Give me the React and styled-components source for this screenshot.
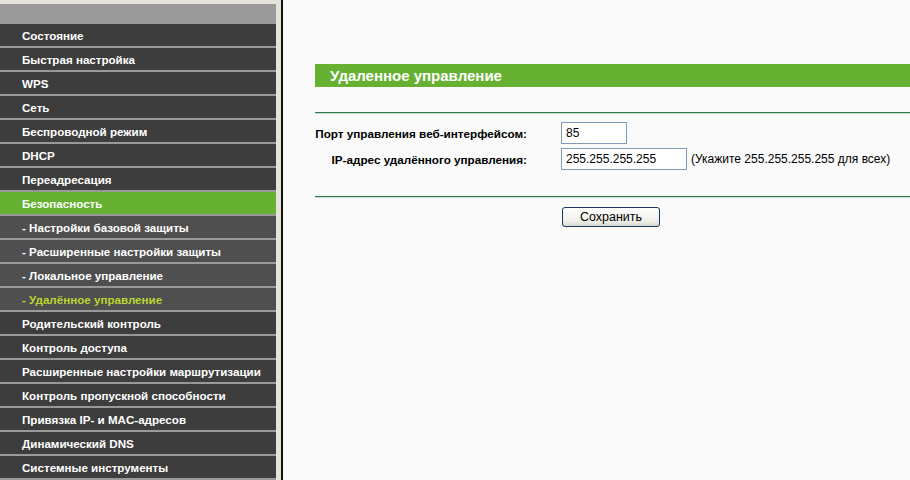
import React from "react";
import styled, { createGlobalStyle } from "styled-components";

const GlobalStyle = createGlobalStyle`
    html, body {
        margin: 0;
        padding: 0;
        background: #fafafa;
        font-family: "Liberation Sans", Arial, sans-serif;
    }
`;

const Page = styled.div`
    display: flex;
    width: 910px;
    height: 480px;
    overflow: hidden;
`;

const Sidebar = styled.div`
    display: flex;
    flex-direction: column;
    gap: 2px;
    width: 276px;
    flex-shrink: 0;
    padding-top: 4px;
    background: #9a9a9a;
    box-shadow: inset 0 4px 0 #e6e4da;
`;

const SideHeader = styled.div`
    height: 18px;
`;

const MenuItem = styled.div`
    height: 22px;
    display: flex;
    align-items: center;
    padding-left: 22px;
    background: ${(p) => (p.$active ? "#66b132" : p.$sub ? "#4f4f4f" : "#3d3d3d")};
    color: ${(p) => (p.$current ? "#b9d531" : "#fff")};
    font-size: 11.6px;
    font-weight: bold;
    white-space: nowrap;
    flex-shrink: 0;
`;

const Divider = styled.div`
    width: 5px;
    flex-shrink: 0;
    background: #e6e4da;
    border-right: 2px solid #111;
`;

const Content = styled.div`
    flex: 1;
    padding: 64px 0 0 32px;
    background: #fafafa;
`;

const TitleBar = styled.div`
    height: 23px;
    line-height: 23px;
    background: #66b132;
    color: #fff;
    font-size: 15px;
    font-weight: bold;
    padding: 0 0 0 15px;
`;

const Line = styled.div`
    height: 1px;
    background: #2f7a4a;
    border-bottom: 1px solid #c9dccf;
    margin-top: ${(p) => p.$top}px;
`;

const Form = styled.div`
    display: grid;
    grid-template-columns: 212px auto;
    column-gap: 34px;
    row-gap: 4px;
    margin-top: 8px;
    align-items: center;
`;

const Label = styled.div`
    font-size: 11.7px;
    font-weight: bold;
    color: #000;
    text-align: right;
    white-space: nowrap;
`;

const Field = styled.div`
    display: flex;
    align-items: center;
    gap: 4px;
`;

const Input = styled.input`
    width: ${(p) => p.$w}px;
    height: 22px;
    box-sizing: border-box;
    border: 1px solid #7f9db9;
    background: #fff;
    font-family: "Liberation Sans", Arial, sans-serif;
    font-size: 12px;
    padding: 0 4px;
    color: #000;
    outline: none;
`;

const Hint = styled.span`
    font-size: 12px;
    color: #000;
    white-space: nowrap;
`;

const ButtonRow = styled.div`
    padding-left: 247px;
    margin-top: 9px;
`;

const SaveButton = styled.button`
    width: 98px;
    height: 20px;
    border: 1px solid #1c3566;
    border-radius: 3px;
    background: linear-gradient(#ffffff, #f0f0ea 70%, #dcdad0);
    font-family: "Liberation Sans", Arial, sans-serif;
    font-size: 12.5px;
    color: #000;
    padding: 0;
`;

const menu = [
    { label: "Состояние" },
    { label: "Быстрая настройка" },
    { label: "WPS" },
    { label: "Сеть" },
    { label: "Беспроводной режим" },
    { label: "DHCP" },
    { label: "Переадресация" },
    { label: "Безопасность", active: true },
    { label: "- Настройки базовой защиты", sub: true },
    { label: "- Расширенные настройки защиты", sub: true },
    { label: "- Локальное управление", sub: true },
    { label: "- Удалённое управление", sub: true, current: true },
    { label: "Родительский контроль" },
    { label: "Контроль доступа" },
    { label: "Расширенные настройки маршрутизации" },
    { label: "Контроль пропускной способности" },
    { label: "Привязка IP- и MAC-адресов" },
    { label: "Динамический DNS" },
    { label: "Системные инструменты" },
];

const App = () => (
    <Page>
        <GlobalStyle />
        <Sidebar>
            <SideHeader />
            {menu.map((m) => (
                <MenuItem
                    key={m.label}
                    $sub={m.sub}
                    $active={m.active}
                    $current={m.current}
                >
                    {m.label}
                </MenuItem>
            ))}
        </Sidebar>
        <Divider />
        <Content>
            <TitleBar>Удаленное управление</TitleBar>
            <Line $top={25} />
            <Form>
                <Label>Порт управления веб-интерфейсом:</Label>
                <Field>
                    <Input $w={66} defaultValue="85" />
                </Field>
                <Label>IP-адрес удалённого управления:</Label>
                <Field>
                    <Input $w={126} defaultValue="255.255.255.255" />
                    <Hint>(Укажите 255.255.255.255 для всех)</Hint>
                </Field>
            </Form>
            <Line $top={26} />
            <ButtonRow>
                <SaveButton>Сохранить</SaveButton>
            </ButtonRow>
        </Content>
    </Page>
);

export default App;
